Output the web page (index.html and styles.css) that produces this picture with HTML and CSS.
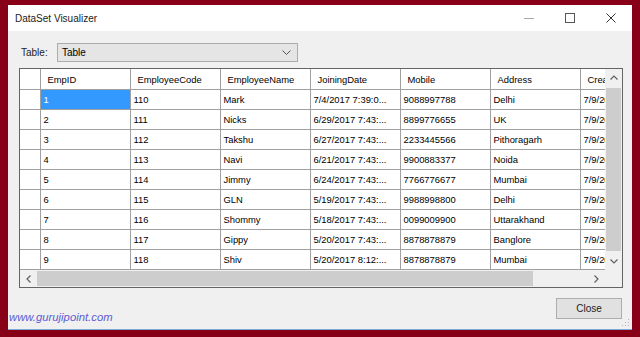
FILE: index.html
```html
<!doctype html>
<html lang="en">
  <head>
    <meta charset="UTF-8" />
    <title>DataSet Visualizer</title>
    <link rel="stylesheet" href="styles.css">
  </head>
  <body>
    <div class="window">
      <div class="titlebar">
        <span class="title">DataSet Visualizer</span>
        <div class="controls">
          <svg width="10" height="10" viewBox="0 0 10 10"><path d="M0 5.5h10" stroke="#a8a8a8" stroke-width="1"/></svg>
          <svg width="10" height="10" viewBox="0 0 10 10"><rect x="0.5" y="0.5" width="9" height="9" fill="none" stroke="#555" stroke-width="1"/></svg>
          <svg width="10" height="10" viewBox="0 0 10 10"><path d="M0.5 0.5l9 9M9.5 0.5l-9 9" stroke="#333" stroke-width="1"/></svg>
        </div>
      </div>

      <div class="toolbar">
        <span class="label">Table:</span>
        <div class="combo">
          <span>Table</span>
          <svg width="9" height="6" viewBox="0 0 9 6"><path d="M0.5 0.5l4 4 4-4" fill="none" stroke="#555" stroke-width="1"/></svg>
        </div>
      </div>

      <div class="grid">
        <div class="viewport">
          <table>
            <colgroup>
              <col class="rowhead"><col><col><col><col><col><col><col>
            </colgroup>
            <thead>
              <tr>
                <th></th><th>EmpID</th><th>EmployeeCode</th><th>EmployeeName</th><th>JoiningDate</th><th>Mobile</th><th>Address</th><th>CreatedDate</th>
              </tr>
            </thead>
            <tbody>
              <tr><td></td><td class="selected">1</td><td>110</td><td>Mark</td><td>7/4/2017 7:39:0...</td><td>9088997788</td><td>Delhi</td><td>7/9/2017 7:43:...</td></tr>
              <tr><td></td><td>2</td><td>111</td><td>Nicks</td><td>6/29/2017 7:43:...</td><td>8899776655</td><td>UK</td><td>7/9/2017 7:43:...</td></tr>
              <tr><td></td><td>3</td><td>112</td><td>Takshu</td><td>6/27/2017 7:43:...</td><td>2233445566</td><td>Pithoragarh</td><td>7/9/2017 7:43:...</td></tr>
              <tr><td></td><td>4</td><td>113</td><td>Navi</td><td>6/21/2017 7:43:...</td><td>9900883377</td><td>Noida</td><td>7/9/2017 7:43:...</td></tr>
              <tr><td></td><td>5</td><td>114</td><td>Jimmy</td><td>6/24/2017 7:43:...</td><td>7766776677</td><td>Mumbai</td><td>7/9/2017 7:43:...</td></tr>
              <tr><td></td><td>6</td><td>115</td><td>GLN</td><td>5/19/2017 7:43:...</td><td>9988998800</td><td>Delhi</td><td>7/9/2017 7:43:...</td></tr>
              <tr><td></td><td>7</td><td>116</td><td>Shommy</td><td>5/18/2017 7:43:...</td><td>0099009900</td><td>Uttarakhand</td><td>7/9/2017 7:43:...</td></tr>
              <tr><td></td><td>8</td><td>117</td><td>Gippy</td><td>5/20/2017 7:43:...</td><td>8878878879</td><td>Banglore</td><td>7/9/2017 7:43:...</td></tr>
              <tr><td></td><td>9</td><td>118</td><td>Shiv</td><td>5/20/2017 8:12:...</td><td>8878878879</td><td>Mumbai</td><td>7/9/2017 7:43:...</td></tr>
              <tr><td></td><td>10</td><td>119</td><td>Raj</td><td>5/20/2017 8:12:...</td><td>8878878879</td><td>Delhi</td><td>7/9/2017 7:43:...</td></tr>
            </tbody>
          </table>
        </div>

        <div class="vscroll">
          <div class="arrow"><svg width="8" height="5" viewBox="0 0 8 5"><path d="M0.5 4.5l3.5-3.5 3.5 3.5" fill="none" stroke="#606060" stroke-width="1.2"/></svg></div>
          <div class="vthumb"></div>
          <div class="arrow"><svg width="8" height="5" viewBox="0 0 8 5"><path d="M0.5 0.5l3.5 3.5 3.5-3.5" fill="none" stroke="#606060" stroke-width="1.2"/></svg></div>
        </div>

        <div class="hscroll">
          <div class="arrow"><svg width="5" height="8" viewBox="0 0 5 8"><path d="M4.5 0.5l-3.5 3.5 3.5 3.5" fill="none" stroke="#606060" stroke-width="1.2"/></svg></div>
          <div class="hthumb"></div>
          <div class="arrow"><svg width="5" height="8" viewBox="0 0 5 8"><path d="M0.5 0.5l3.5 3.5-3.5 3.5" fill="none" stroke="#606060" stroke-width="1.2"/></svg></div>
        </div>
        <div class="corner"></div>
      </div>

      <div class="footer">
        <span class="watermark">www.gurujipoint.com</span>
        <button class="close-btn">Close</button>
      </div>

      <svg class="grip" width="8" height="8" viewBox="0 0 8 8">
        <rect x="6" y="0" width="1" height="1" fill="#b4b4b4"/>
        <rect x="3" y="3" width="1" height="1" fill="#b4b4b4"/>
        <rect x="6" y="3" width="1" height="1" fill="#b4b4b4"/>
        <rect x="0" y="6" width="1" height="1" fill="#b4b4b4"/>
        <rect x="3" y="6" width="1" height="1" fill="#b4b4b4"/>
        <rect x="6" y="6" width="1" height="1" fill="#b4b4b4"/>
      </svg>
    </div>
  </body>
</html>
```

FILE: styles.css
```css
body {
  margin: 0;
  padding: 5px 8px;
  background-color: #880018;
  font-family: "Liberation Sans", Arial, sans-serif;
  font-size: 10px;
  color: #000;
}
.window {
  position: relative;
  width: 624px;
  height: 325px;
  box-sizing: border-box;
  background: #f0f0f0;
  border-bottom: 1px solid #7eaad8;
  display: flex;
  flex-direction: column;
}
.titlebar {
  height: 26px;
  flex: none;
  background: #fff;
  display: flex;
  align-items: center;
  justify-content: space-between;
  padding-left: 7px;
}
.title {
  color: #222;
  font-size: 10px;
}
.controls {
  display: flex;
  gap: 31px;
  padding-right: 16px;
}
.controls svg {
  display: block;
}
.toolbar {
  display: flex;
  align-items: center;
  padding: 12px 0 0 13px;
  flex: none;
}
.label {
  width: 36px;
  color: #222;
}
.combo {
  width: 241px;
  height: 19px;
  box-sizing: border-box;
  border: 1px solid #acacac;
  background: #e5e5e5;
  display: flex;
  align-items: center;
  justify-content: space-between;
  padding: 0 6px 0 4px;
}
.grid {
  margin: 6px 9px 0 11px;
  height: 220px;
  box-sizing: border-box;
  border: 1px solid #646464;
  display: grid;
  grid-template-columns: 1fr 17px;
  grid-template-rows: 1fr 17px;
  flex: none;
  background: #fff;
}
.viewport {
  overflow: hidden;
  background: #fff;
}
table {
  table-layout: fixed;
  border-collapse: collapse;
  width: 650px;
  font-size: 9.4px;
}
col {
  width: 90px;
}
col.rowhead {
  width: 20px;
}
th,
td {
  border-right: 1px solid #a0a0a0;
  border-bottom: 1px solid #a0a0a0;
  white-space: nowrap;
  overflow: hidden;
  text-align: left;
  font-weight: normal;
  padding: 0 0 0 3px;
  height: 19px;
}
th {
  height: 20px;
  padding-left: 7px;
}
td.selected {
  background: #3399ff;
  color: #fff;
}
.vscroll {
  background: #f0f0f0;
  display: flex;
  flex-direction: column;
}
.vscroll .arrow {
  height: 17px;
  display: flex;
  align-items: center;
  justify-content: center;
  flex: none;
}
.vthumb {
  flex: 1;
  margin: 2px 1px;
  background: #cdcdcd;
}
.hscroll {
  background: #f0f0f0;
  display: flex;
}
.hscroll .arrow {
  width: 17px;
  display: flex;
  align-items: center;
  justify-content: center;
  flex: none;
}
.hthumb {
  width: 496px;
  margin: 1px 0;
  background: #cdcdcd;
}
.hscroll .arrow:last-child {
  margin-left: auto;
}
.corner {
  background: #f0f0f0;
}
.footer {
  flex: 1;
  display: flex;
  justify-content: space-between;
  padding: 10px 10px 0 1px;
}
.watermark {
  align-self: flex-end;
  margin-bottom: 6px;
  font-style: italic;
  font-size: 11.3px;
  color: #5c5cd4;
}
.close-btn {
  width: 66px;
  height: 21px;
  border: 1px solid #adadad;
  background: #e1e1e1;
  font-family: inherit;
  font-size: 10px;
  color: #222;
  padding: 0;
}
.grip {
  position: absolute;
  right: 2px;
  bottom: 2px;
}
```
